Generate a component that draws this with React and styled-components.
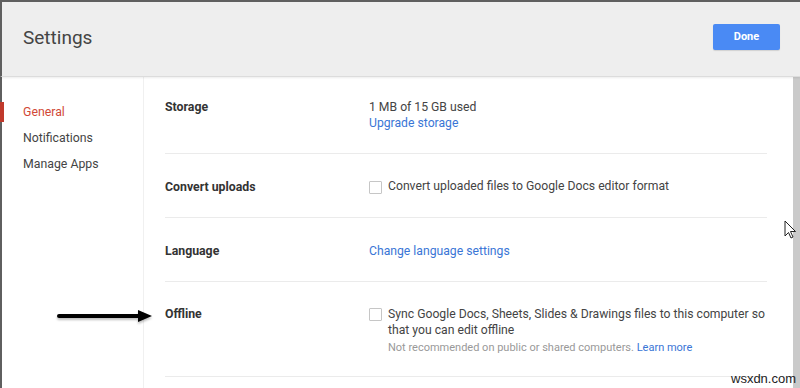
import styled, { createGlobalStyle } from "styled-components";

const GlobalStyle = createGlobalStyle`
	html, body {
		margin: 0;
		padding: 0;
		background: #ffffff;
	}
	body {
		font-family: Roboto, "Liberation Sans", Arial, sans-serif;
	}
`;

const Frame = styled.div`
	position: relative;
	width: 800px;
	height: 388px;
	overflow: hidden;
	display: flex;
	flex-direction: column;
	border-top: 2px solid #5f5f5f;
	box-sizing: border-box;
	background: #fff;
`;

const Header = styled.div`
	height: 75px;
	flex-shrink: 0;
	display: flex;
	align-items: center;
	justify-content: space-between;
	padding: 0 20px 5px 21px;
	box-sizing: border-box;
	background: #eeeeee;
	border-left: 2px solid #5f5f5f;
	border-bottom: 1px solid #dcdcdc;
	box-shadow: 0 1px 2px rgba(0, 0, 0, 0.08);
	position: relative;
	z-index: 1;
`;

const Title = styled.h1`
	margin: 0 0 -2px;
	font-size: 19px;
	font-weight: 400;
	color: #444;
`;

const DoneButton = styled.button`
	width: 67px;
	height: 26px;
	border: none;
	border-radius: 2px;
	background: #4a8af4;
	color: #fff;
	font-family: inherit;
	font-size: 11px;
	font-weight: 700;
	box-shadow: 0 1px 1px rgba(0, 0, 0, 0.12);
	cursor: pointer;
`;

const Body = styled.div`
	flex: 1;
	display: flex;
`;

const Sidebar = styled.nav`
	width: 141px;
	flex-shrink: 0;
	border-left: 2px solid #5f5f5f;
	border-right: 1px solid #f0f0f0;
	padding-top: 22px;
	display: flex;
	flex-direction: column;
`;

const NavItem = styled.div`
	display: flex;
	align-items: center;
	font-size: 12.3px;
	color: ${(p) => (p.$active ? "#d14836" : "#444")};
	margin-left: ${(p) => (p.$active ? "-2px" : "0")};
	padding-left: ${(p) => (p.$active ? "19px" : "21px")};
	border-left: ${(p) => (p.$active ? "4px solid #c0392b" : "none")};
	height: ${(p) => (p.$active ? "20px" : "26px")};
	margin-top: ${(p) => (p.$active ? "3px" : "0")};
	margin-bottom: ${(p) => (p.$active ? "3px" : "0")};
`;

const Main = styled.main`
	flex: 1;
	padding: 0 26px 0 21px;
`;

const Row = styled.div`
	display: flex;
	align-items: flex-start;
	padding: ${(p) => (p.$first ? "22px 0" : "24px 0 20px")};
	border-bottom: 1px solid #ebebeb;
`;

const Label = styled.div`
	width: 204px;
	flex-shrink: 0;
	font-size: 12.3px;
	font-weight: 700;
	color: #333;
	line-height: ${(p) => (p.$tight ? "16px" : "19px")};
`;

const Value = styled.div`
	flex: 1;
	font-size: 12.2px;
	line-height: ${(p) => (p.$tight ? "16px" : "19px")};
	color: #444;
`;

const Link = styled.a`
	color: #3a76d6;
	text-decoration: none;
	cursor: pointer;
`;

const CheckLine = styled.div`
	display: flex;
	align-items: flex-start;
	gap: 6px;
`;

const Checkbox = styled.span`
	width: 11px;
	height: 11px;
	margin-top: ${(p) => (p.$top ? "2px" : "3px")};
	flex-shrink: 0;
	border: 1px solid #c6c6c6;
	border-radius: 1px;
	background: #fff;
`;

const CheckText = styled.div`
	line-height: 16px;
`;

const Hint = styled.div`
	margin-top: 2px;
	font-size: 11px;
	line-height: 16px;
	color: #999;
`;

const Scrollbar = styled.div`
	width: 7px;
	flex-shrink: 0;
	background: #cacaca;
`;

const Arrow = styled.svg`
	position: absolute;
	left: 56px;
	top: 305px;
	filter: drop-shadow(0 2px 1px rgba(0, 0, 0, 0.25));
`;

const Cursor = styled.svg`
	position: absolute;
	left: 784px;
	top: 218px;
`;

const Watermark = styled.div`
	position: absolute;
	left: 731px;
	top: 369px;
	font-family: "Liberation Sans", Arial, sans-serif;
	font-size: 13px;
	color: #222;
`;

const App = () => {
	return (
		<>
			<GlobalStyle />
			<Frame>
				<Header>
					<Title>Settings</Title>
					<DoneButton>Done</DoneButton>
				</Header>
				<Body>
					<Sidebar>
						<NavItem $active>General</NavItem>
						<NavItem>Notifications</NavItem>
						<NavItem>Manage Apps</NavItem>
					</Sidebar>
					<Main>
						<Row $first>
							<Label $tight>Storage</Label>
							<Value $tight>
								<div>1 MB of 15 GB used</div>
								<Link>Upgrade storage</Link>
							</Value>
						</Row>
						<Row>
							<Label>Convert uploads</Label>
							<Value>
								<CheckLine>
									<Checkbox />
									<CheckText>Convert uploaded files to Google Docs editor format</CheckText>
								</CheckLine>
							</Value>
						</Row>
						<Row>
							<Label>Language</Label>
							<Value>
								<Link>Change language settings</Link>
							</Value>
						</Row>
						<Row>
							<Label $tight>Offline</Label>
							<Value $tight>
								<CheckLine>
									<Checkbox $top />
									<div>
										<CheckText>
											Sync Google Docs, Sheets, Slides &amp; Drawings files to this computer so
											that you can edit offline
										</CheckText>
										<Hint>
											Not recommended on public or shared computers. <Link>Learn more</Link>
										</Hint>
									</div>
								</CheckLine>
							</Value>
						</Row>
					</Main>
					<Scrollbar />
				</Body>
				<Arrow width="100" height="18" viewBox="0 0 100 18">
					<line x1="3" y1="9" x2="84" y2="9" stroke="#000" strokeWidth="4" strokeLinecap="round" />
					<polygon points="82,3 96,9 82,15" fill="#000" />
				</Arrow>
				<Cursor width="14" height="20" viewBox="0 0 14 20">
					<path d="M1 1 L1 16 L4.5 12.5 L7 18 L9 17 L6.5 11.5 L11.5 11.5 Z" fill="#fff" stroke="#222" strokeWidth="1" strokeLinejoin="round" />
				</Cursor>
				<Watermark>wsxdn.com</Watermark>
			</Frame>
		</>
	);
};

export default App;
